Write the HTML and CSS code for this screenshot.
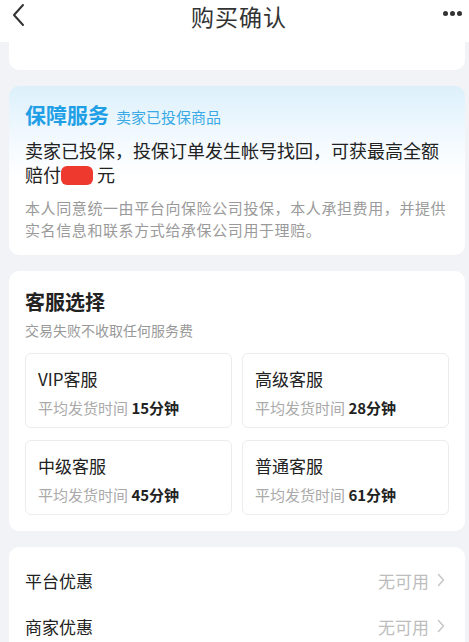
FILE: index.html
```html
<!DOCTYPE html>
<html>
<head>
    <meta charset="UTF-8">
    <title>购买确认</title>
    <link rel="stylesheet" href="styles.css">
</head>
<body>
<div class="topbar">
    <svg class="back" width="14" height="24" viewBox="0 0 14 24">
        <path d="M12 2 L3 12 L12 22" fill="none" stroke="#333" stroke-width="2" stroke-linecap="round" stroke-linejoin="round"/>
    </svg>
    <div class="title">购买确认</div>
    <div class="more"><i></i><i></i><i></i></div>
</div>

<div class="page">
    <div class="card stub"></div>

    <div class="card guard">
        <div class="guard-head">
            <span class="guard-title">保障服务</span>
            <span class="guard-tag">卖家已投保商品</span>
        </div>
        <p class="guard-main">卖家已投保，投保订单发生帐号找回，可获最高全额赔付<span class="blur"></span>元</p>
        <p class="guard-note">本人同意统一由平台向保险公司投保，本人承担费用，并提供实名信息和联系方式给承保公司用于理赔。</p>
    </div>

    <div class="card service">
        <div class="sec-title">客服选择</div>
        <div class="sec-sub">交易失败不收取任何服务费</div>
        <div class="options">
            <div class="opt">
                <div class="opt-name">VIP客服</div>
                <div class="opt-time">平均发货时间 <b>15分钟</b></div>
            </div>
            <div class="opt">
                <div class="opt-name">高级客服</div>
                <div class="opt-time">平均发货时间 <b>28分钟</b></div>
            </div>
            <div class="opt">
                <div class="opt-name">中级客服</div>
                <div class="opt-time">平均发货时间 <b>45分钟</b></div>
            </div>
            <div class="opt">
                <div class="opt-name">普通客服</div>
                <div class="opt-time">平均发货时间 <b>61分钟</b></div>
            </div>
        </div>
    </div>

    <div class="card discount">
        <div class="row">
            <span>平台优惠</span>
            <span class="row-val">无可用
                <svg width="8" height="14" viewBox="0 0 8 14"><path d="M1.5 1.5 L6.5 7 L1.5 12.5" fill="none" stroke="#c4c4c4" stroke-width="1.4" stroke-linecap="round" stroke-linejoin="round"/></svg>
            </span>
        </div>
        <div class="row">
            <span>商家优惠</span>
            <span class="row-val">无可用
                <svg width="8" height="14" viewBox="0 0 8 14"><path d="M1.5 1.5 L6.5 7 L1.5 12.5" fill="none" stroke="#c4c4c4" stroke-width="1.4" stroke-linecap="round" stroke-linejoin="round"/></svg>
            </span>
        </div>
    </div>
</div>
</body>
</html>
```

FILE: styles.css
```css
body {
    margin: 0;
    font-family: "Noto Sans CJK SC", "Noto Sans", sans-serif;
    background-color: #f2f3f7;
    color: #222;
    overflow: hidden;
}
p {
    margin: 0;
}
.topbar {
    height: 42px;
    background-color: #fff;
    display: flex;
    align-items: flex-start;
    justify-content: space-between;
    padding: 1px 7px 0 11px;
    box-sizing: border-box;
}
.topbar .back {
    margin-top: 2px;
}
.topbar .title {
    font-size: 23px;
    line-height: 30px;
    color: #333;
    letter-spacing: 1px;
    margin-left: 10px;
}
.topbar .more {
    display: flex;
    gap: 2px;
    margin-top: 10px;
}
.topbar .more i {
    width: 5px;
    height: 5px;
    border-radius: 50%;
    background-color: #333;
}
.page {
    padding: 0 4px 0 9px;
}
.card {
    background-color: #fff;
    border-radius: 10px;
    margin-bottom: 16px;
}
.card.stub {
    height: 28px;
    border-radius: 0 0 10px 10px;
}
.guard {
    background: linear-gradient(180deg, #dcf0fb 0%, #f2f9fe 30%, #fff 55%);
    padding: 13px 14px 16px 16px;
    height: 169px;
    box-sizing: border-box;
}
.guard-head {
    display: flex;
    align-items: baseline;
    gap: 7px;
}
.guard-title {
    font-size: 21px;
    font-weight: bold;
    color: #1fa0e6;
}
.guard-tag {
    font-size: 15px;
    color: #3aaae6;
}
.guard-main {
    margin-top: 9px;
    font-size: 18px;
    line-height: 24px;
    color: #222;
}
.blur {
    display: inline-block;
    width: 32px;
    height: 19px;
    margin: 0 4px -3px 0;
    background-color: #ee3a2e;
    border-radius: 6px;
}
.guard-note {
    margin-top: 11px;
    font-size: 15px;
    line-height: 22px;
    letter-spacing: 0.6px;
    color: #9a9a9a;
}
.service {
    padding: 17px 16px 16px 16px;
}
.sec-title {
    font-size: 20px;
    font-weight: bold;
    line-height: 28px;
}
.sec-sub {
    margin-top: 4px;
    font-size: 14px;
    color: #999;
}
.options {
    margin-top: 13px;
    display: grid;
    grid-template-columns: 1fr 1fr;
    gap: 12px 10px;
}
.opt {
    border: 1px solid #ececec;
    border-radius: 6px;
    height: 75px;
    box-sizing: border-box;
    padding: 13px 12px 0 12px;
}
.opt-name {
    font-size: 17px;
    line-height: 24px;
    color: #222;
}
.opt-time {
    margin-top: 6px;
    font-size: 15px;
    color: #aaa;
}
.opt-time b {
    color: #222;
}
.discount {
    padding: 21px 20px 0 16px;
    margin-bottom: 0;
    height: 120px;
}
.row {
    display: flex;
    justify-content: space-between;
    align-items: center;
    font-size: 17px;
    height: 24px;
    margin-bottom: 22px;
}
.row-val {
    display: flex;
    align-items: center;
    gap: 8px;
    font-size: 17px;
    color: #bdbdbd;
}
```
